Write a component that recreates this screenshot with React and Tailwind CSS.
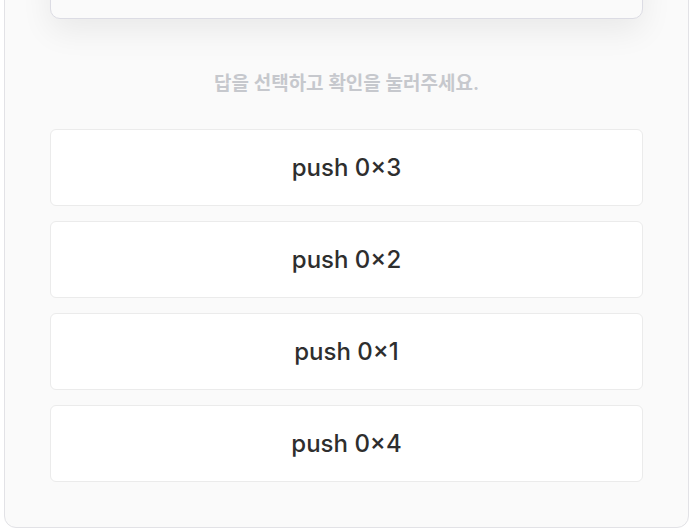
import React from 'react';

const choices = ['push 0×3', 'push 0×2', 'push 0×1', 'push 0×4'];

export default function App() {
  return (
    <div
      className="h-[528px] overflow-hidden bg-white pl-[4px] pr-[5px]"
      style={{ fontFamily: 'Inter, "Noto Sans CJK KR", sans-serif' }}
    >
      <div className="-mt-[41px] rounded-b-[12px] border border-[#e2e2e6] bg-[#fafafa] px-[45px] pb-[45px]">
        <div className="h-[59px] rounded-[10px] border border-[#dcdce4] bg-[#fafafa] shadow-[0_12px_32px_rgba(0,0,0,0.07)]" />

        <p className="mt-[53px] text-center text-[19px] leading-6 font-semibold text-[#c6c8cd]">
          답을 선택하고 확인을 눌러주세요.
        </p>

        <div className="mt-[33px] flex flex-col gap-[15px]">
          {choices.map((c) => (
            <button
              key={c}
              className="flex h-[77px] items-center justify-center rounded-[6px] border border-[#ebebeb] bg-white text-[24px] font-[550] text-[#2e2e2e]"
            >
              {c}
            </button>
          ))}
        </div>
      </div>
    </div>
  );
}
